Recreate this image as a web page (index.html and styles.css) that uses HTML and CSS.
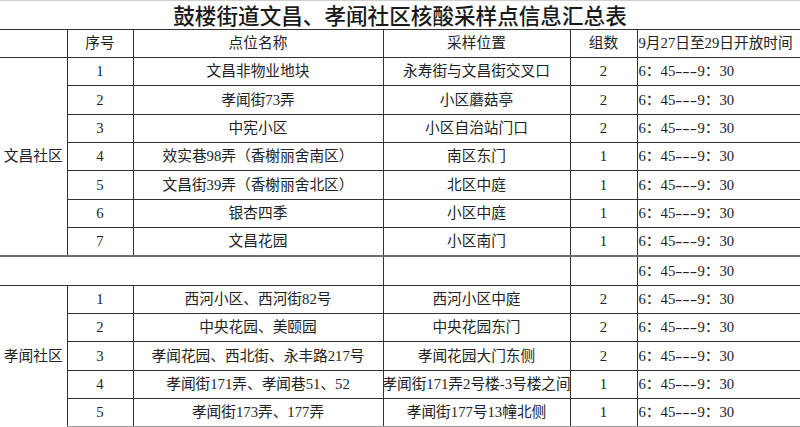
FILE: index.html
```html
<!DOCTYPE html>
<html lang="zh-CN">
<head>
<meta charset="utf-8">
<title>鼓楼街道文昌、孝闻社区核酸采样点信息汇总表</title>
<link rel="stylesheet" href="styles.css">
</head>
<body>
<table class="sheet">
  <colgroup>
    <col class="c-area"><col class="c-no"><col class="c-name"><col class="c-loc"><col class="c-grp"><col class="c-time">
  </colgroup>
  <tr class="title-row"><td colspan="6" class="title">鼓楼街道文昌、孝闻社区核酸采样点信息汇总表</td></tr>
  <tr class="head">
    <td class="area"></td><td>序号</td><td>点位名称</td><td>采样位置</td><td>组数</td><td class="time">9月27日至29日开放时间</td>
  </tr>
  <tr>
    <td class="area" rowspan="7">文昌社区</td><td>1</td><td>文昌非物业地块</td><td class="loc"><div class="fit">永寿街与文昌街交叉口</div></td><td>2</td><td class="time">6：45<span class="dash">---</span>9：30</td>
  </tr>
  <tr><td>2</td><td>孝闻街73弄</td><td class="loc"><div class="fit">小区蘑菇亭</div></td><td>2</td><td class="time">6：45<span class="dash">---</span>9：30</td></tr>
  <tr><td>3</td><td>中宪小区</td><td class="loc"><div class="fit">小区自治站门口</div></td><td>2</td><td class="time">6：45<span class="dash">---</span>9：30</td></tr>
  <tr><td>4</td><td>效实巷98弄（香榭丽舍南区）</td><td class="loc"><div class="fit">南区东门</div></td><td>1</td><td class="time">6：45<span class="dash">---</span>9：30</td></tr>
  <tr><td>5</td><td>文昌街39弄（香榭丽舍北区）</td><td class="loc"><div class="fit">北区中庭</div></td><td>1</td><td class="time">6：45<span class="dash">---</span>9：30</td></tr>
  <tr><td>6</td><td>银杏四季</td><td class="loc"><div class="fit">小区中庭</div></td><td>1</td><td class="time">6：45<span class="dash">---</span>9：30</td></tr>
  <tr><td>7</td><td>文昌花园</td><td class="loc"><div class="fit">小区南门</div></td><td>1</td><td class="time">6：45<span class="dash">---</span>9：30</td></tr>
  <tr class="gap">
    <td colspan="3"></td><td class="loc"></td><td></td><td class="time">6：45<span class="dash">---</span>9：30</td>
  </tr>
  <tr>
    <td class="area" rowspan="5">孝闻社区</td><td>1</td><td>西河小区、西河街82号</td><td class="loc"><div class="fit">西河小区中庭</div></td><td>2</td><td class="time">6：45<span class="dash">---</span>9：30</td>
  </tr>
  <tr><td>2</td><td>中央花园、美颐园</td><td class="loc"><div class="fit">中央花园东门</div></td><td>2</td><td class="time">6：45<span class="dash">---</span>9：30</td></tr>
  <tr><td>3</td><td>孝闻花园、西北街、永丰路217号</td><td class="loc"><div class="fit">孝闻花园大门东侧</div></td><td>2</td><td class="time">6：45<span class="dash">---</span>9：30</td></tr>
  <tr><td>4</td><td>孝闻街171弄、孝闻巷51、52</td><td class="loc"><div class="fit">孝闻街171弄2号楼-3号楼之间</div></td><td>1</td><td class="time">6：45<span class="dash">---</span>9：30</td></tr>
  <tr class="last"><td>5</td><td>孝闻街173弄、177弄</td><td class="loc"><div class="fit">孝闻街177号13幢北侧</div></td><td>1</td><td class="time">6：45<span class="dash">---</span>9：30</td></tr>
</table>
</body>
</html>
```

FILE: styles.css
```css
html, body {
  margin: 0;
  padding: 0;
  background: #ffffff;
  overflow: hidden;
}

.sheet {
  width: 800px;
  table-layout: fixed;
  border-collapse: collapse;
  font-family: "Liberation Serif", "Noto Sans CJK SC", serif;
  font-size: 14.7px;
  color: #222222;
}

.c-area { width: 67px; }
.c-no { width: 66px; }
.c-name { width: 250px; }
.c-loc { width: 187px; }
.c-grp { width: 67px; }
.c-time { width: 163px; }

.sheet td {
  padding: 0;
  height: 27.35px;
  text-align: center;
  vertical-align: middle;
  white-space: nowrap;
  overflow: hidden;
  border: 1px solid #333333;
  line-height: 1;
}

.sheet td:first-child { border-left: none; }
.sheet td.time { border-right: none; text-align: left; padding-left: 1px; }

.title-row td.title {
  height: 27.6px;
  border: none;
  border-top: 1px solid #cfcfcf;
  border-bottom: 1px solid #333333;
  font-family: "Noto Sans CJK SC", sans-serif;
  font-weight: 500;
  font-size: 21.6px;
  color: #1a1a1a;
  text-align: center;
}

.sheet td.area { border-left: none; }

.fit {
  display: flex;
  justify-content: center;
  white-space: nowrap;
}

.dash {
  display: inline-block;
  transform: scaleX(1.5);
  transform-origin: left center;
  margin-right: 7.5px;
}

.gap td { border-top: 2px solid #6f6f6f; }

.last td { border-bottom: 3px solid #9a9a9a; }
```
